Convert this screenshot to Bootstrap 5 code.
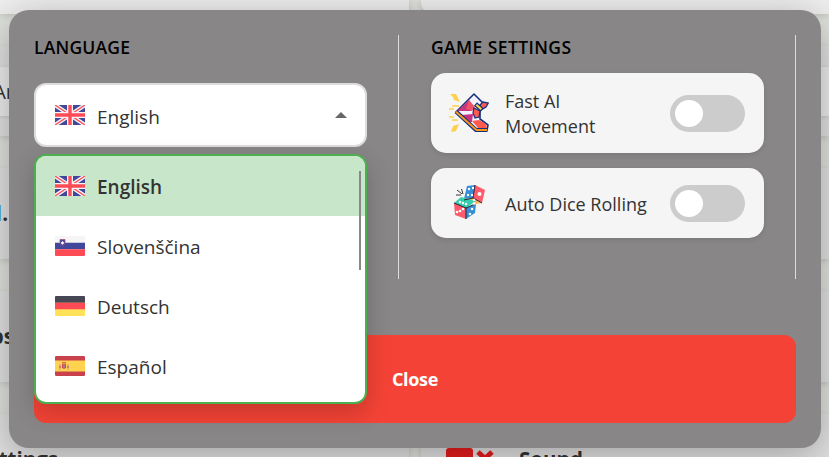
<!DOCTYPE html>
<html lang="en">
<head>
<meta charset="utf-8">
<meta name="viewport" content="width=device-width, initial-scale=1">
<title>Language and game settings</title>
<link rel="stylesheet" href="https://cdn.jsdelivr.net/npm/bootstrap@5.3.0/dist/css/bootstrap.min.css">
<style>
body{font-family:"Open Sans","Noto Sans",sans-serif;color:#333;background:#e1e4de;height:457px;overflow:hidden}
.backdrop-page{height:457px;column-gap:12px;overflow:hidden}
.page-col{flex:1 1 0;min-width:0;row-gap:32px}
.page-col:first-child{flex:0 0 409px}
.tile{background:#e2e2e3;box-shadow:0 2px 6px rgba(0,0,0,.13);flex:none;overflow:hidden;white-space:nowrap;font-size:20.5px;font-weight:700}
.tile-head{height:14px;background:#efefef}
.tile-name{height:90px;padding:21px 0 20px}
.tile-row{height:91px}
.tile-last{height:91px}
.page-col:last-child .tile-head{border-bottom-left-radius:12px}
.name-box{background:#ededee;height:49px;line-height:49px;font-size:20px;font-weight:400;box-shadow:0 1px 4px rgba(0,0,0,.12)}
.cut{display:flex;justify-content:flex-end}
.cut-sm{width:14px}.cut-md{width:8px}.cut-lg{width:58px}
.accent{color:#4ea6dc}
.panel{left:9px;top:10px;width:812px;height:438px;background:#888686;border-radius:20px;padding:25px;box-shadow:0 8px 40px rgba(0,0,0,.3)}
.section-box{width:365px;height:244px;padding-right:31px;border-right:1px solid #ddd}
.sections{gap:32px}
.title{font-size:17.5px;line-height:25px;font-weight:600;letter-spacing:.4px;color:#000;margin:0;white-space:nowrap}
.title.t-lang{letter-spacing:.2px}
.picker{height:64px;margin-top:23px;border:2px solid #ddd;border-radius:12px;background:#fff;padding:4px 18px 0 19px;font-size:19px;color:#333}
.flag{width:30px;height:20px;flex:none;margin-right:12px;position:relative;top:-1px;display:block}
.picker .flag{top:-2px}
.caret{width:0;height:0;border:6px solid transparent;border-top:0;border-bottom-color:#666;margin-top:-4px}
.options{top:119px;left:0;width:333px;height:250px;border:2px solid #4caf50;border-radius:12px;background:#fff;overflow:hidden;box-shadow:0 8px 24px rgba(0,0,0,.2);z-index:3;margin:0;font-size:19px}
.option{height:60px;padding:2px 19px 0}
.option.chosen{background:#c8e6c9;font-weight:600}
.thumb{width:2px;height:99px;top:15px;right:4px;background:#888}
.setting{background:#f5f5f5;border-radius:15px;box-shadow:0 2px 5px rgba(0,0,0,.1);padding:0 19px 0 18px;font-size:18px;line-height:25px}
.setting svg{width:40px;height:40px;flex:none}
.setting .caption{width:153px;margin-left:16px;padding-top:2px;flex:none;white-space:nowrap}
.tall{height:80px;margin-top:13px}.short{height:70px;margin-top:15px}
.toggle{width:75px;height:37px;border-radius:20px;background:#ccc;padding:5px;margin-left:auto}
.knob{width:28px;height:27px;border-radius:50%;background:#fff}
.close-btn,.close-btn:hover{height:88px;margin-top:56px;background:#f44336;color:#fff;border:0;border-radius:12px;font:700 18px "Open Sans","Noto Sans",sans-serif;letter-spacing:-.3px}
</style>
</head>
<body>
<div class="backdrop-page d-flex">
  <div class="page-col d-flex flex-column">
    <div class="tile tile-head"></div>
    <div class="tile tile-name"><div class="name-box"><span class="cut cut-sm">Ar</span></div></div>
    <div class="tile tile-row d-flex align-items-center"><span class="cut cut-md"><span class="accent">d</span>.</span></div>
    <div class="tile tile-row d-flex align-items-center"><span class="cut cut-sm">Tips</span></div>
    <div class="tile tile-last d-flex align-items-center"><span class="cut cut-lg">Settings</span></div>
  </div>
  <div class="page-col d-flex flex-column">
    <div class="tile tile-head"></div>
    <div class="tile tile-name"><div class="name-box"></div></div>
    <div class="tile tile-row"></div>
    <div class="tile tile-row"></div>
    <div class="tile tile-last d-flex align-items-center">
      <svg class="ms-4" width="50" height="28" viewBox="0 0 50 28" aria-hidden="true"><rect x="1" y="2" width="27" height="24" rx="3" fill="#e81c1c"/><path d="M33 6l14 13M47 6L33 19" stroke="#e81c1c" stroke-width="5"/></svg>
      <span class="ms-4">Sound</span>
    </div>
  </div>
</div>

<svg class="d-none">
  <defs>
    <symbol id="uk" viewBox="0 0 30 20"><rect width="30" height="20" fill="#41479b"/><path d="M0 0L30 20M30 0L0 20" stroke="#f5f5f5" stroke-width="4"/><path d="M0 0L30 20M30 0L0 20" stroke="#ff4b55" stroke-width="1.3"/><path d="M15 0V20M0 10H30" stroke="#f5f5f5" stroke-width="6"/><path d="M15 0V20M0 10H30" stroke="#ff4b55" stroke-width="3.4"/></symbol>
  </defs>
</svg>

<main class="panel position-absolute">
  <div class="sections d-flex">
    <section class="section-box position-relative">
      <h2 class="title t-lang">LANGUAGE</h2>
      <div class="picker d-flex align-items-center">
        <svg class="flag"><use href="#uk"/></svg><span>English</span><i class="caret ms-auto"></i>
      </div>
      <ul class="options list-unstyled position-absolute">
        <li class="option chosen d-flex align-items-center"><svg class="flag"><use href="#uk"/></svg>English</li>
        <li class="option d-flex align-items-center">
          <svg class="flag" viewBox="0 0 30 20"><rect width="30" height="20" rx="1.2" fill="#f5f5f5"/><path d="M0 6.7H30V13.3H0Z" fill="#41479b"/><path d="M0 13.3H30V19q0 1-1 1H1q-1 0-1-1Z" fill="#ff4b55"/><path d="M5 3.5h5v3q0 2.5-2.5 3.5Q5 9 5 6.500Z" fill="#41479b" stroke="#a04a78" stroke-width=".7"/><path d="M5.800 7L7.500 5 9.200 7 7.500 8.800Z" fill="#fff"/></svg>Slovenščina</li>
        <li class="option d-flex align-items-center">
          <svg class="flag" viewBox="0 0 30 20"><rect width="30" height="20" rx="1.2" fill="#ffe15a"/><path d="M0 6.700V1q0-1 1-1H29q1 0 1 1V6.700Z" fill="#464655"/><path d="M0 6.700H30V13.300H0Z" fill="#ff4b55"/></svg>Deutsch</li>
        <li class="option d-flex align-items-center">
          <svg class="flag" viewBox="0 0 30 20"><rect width="30" height="20" rx="1.2" fill="#c8414b"/><path d="M0 4.500H30V15.500H0Z" fill="#ffd250"/><path d="M7 8.200h4v3.500q-2 2.300-4 0Z" fill="#c8414b"/><path d="M5 8v6M13 8v6" stroke="#bda6a2" stroke-width="1.200"/><path d="M4 11h2M12 11h2M7 6.700h4" stroke="#d46b48" stroke-width="1.400"/><circle cx="9" cy="10.500" r="1.100" fill="#8f9dd0"/></svg>Español</li>
        <li class="thumb position-absolute"></li>
      </ul>
    </section>
    <section class="section-box">
      <h2 class="title">GAME SETTINGS</h2>
      <div class="setting tall d-flex align-items-center">
        <svg viewBox="0 0 40 40" aria-hidden="true">
          <path d="M1 1L7 1 11 9 5 7 4 4ZM2 39L4 33 10 31 7 38Z" fill="#ffd04b"/>
          <path d="M3 13h7M0 16h5M0 24h5M3 27h6" stroke="#ffd04b" stroke-width="1.400"/>
          <path d="M25 1L7 19 27 37H38L39 32 31 26 31 18 35 14 35 11Z" fill="#f4f2ff" stroke="#14317d" stroke-width="1.600" stroke-linejoin="round"/>
          <path d="M20 7L8 18 22 18 24 14Z" fill="#c7357c"/><path d="M20 7L26 14 23 18 17 16Z" fill="#ef5368"/>
          <path d="M13 22L24 21 23 29 20 29Z" fill="#c83180"/>
          <path d="M23 28L30 27 37 31 38 35 29 35Z" fill="#ff5a4d"/>
          <path d="M7 18.500L27 37H38.500" fill="none" stroke="#14317d" stroke-width="4.200" stroke-linejoin="round"/>
          <path d="M7 18.700L27.500 37H38" fill="none" stroke="#ff981f" stroke-width="1.900"/>
          <path d="M25 15L31 18 30 24 26 25 24 20Z" fill="#ff5a4d" stroke="#14317d" stroke-width="1.200"/>
          <path d="M31 12L34 9 39.300 10 37 14 32 17Z" fill="#ff5a4d" stroke="#14317d" stroke-width="1.300"/>
          <path d="M26.500 11L33 17" stroke="#14317d" stroke-width="4.500"/><path d="M27.300 11.700L32.300 16.300" stroke="#ffd04b" stroke-width="2.200"/>
        </svg>
        <span class="caption">Fast AI<br>Movement</span>
        <div class="toggle"><div class="knob"></div></div>
      </div>
      <div class="setting short d-flex align-items-center">
        <svg viewBox="0 0 40 40" aria-hidden="true">
          <path d="M18 3L26 2 24 15 15 16Z" fill="#368fd5"/><path d="M26 2L36 7 33 20 24 15Z" fill="#ff5a6b"/><path d="M15 16L24 15 33 20 27 21Z" fill="#ffb55c"/>
          <path d="M5 20L12 14 27 18 17 25Z" fill="#36cfae"/><path d="M5 20L17 25V36L6 32Z" fill="#ff5a6b"/><path d="M17 25L27 21 26 30 17 36Z" fill="#368fd5"/>
          <path d="M26 2L24 15 33 20M5 20L17 25V36M17 25L26 21M24 15L15 17" fill="none" stroke="#202330" stroke-width="1"/>
          <path d="M8 7L13 11M12.500 6L14 11M7 12L12 12" stroke="#333" stroke-width="1"/>
          <g fill="#fff"><circle cx="20" cy="6" r="1.200"/><circle cx="24" cy="5" r="1.200"/><circle cx="19" cy="12" r="1.200"/><circle cx="23" cy="12" r="1.200"/><circle cx="30.500" cy="11" r="2"/><circle cx="25" cy="17" r="1.300"/><circle cx="25" cy="20.500" r="1.300"/><circle cx="11" cy="19" r="1.200"/><circle cx="14" cy="20" r="1.200"/><circle cx="17" cy="21" r="1.200"/><circle cx="8" cy="29" r="1.300"/><circle cx="11" cy="28" r="1.300"/><circle cx="14" cy="26" r="1.300"/><circle cx="23" cy="26" r="1.300"/><circle cx="21" cy="31" r="1.300"/></g>
        </svg>
        <span class="caption">Auto Dice Rolling</span>
        <div class="toggle"><div class="knob"></div></div>
      </div>
    </section>
  </div>
  <button class="close-btn btn d-block w-100" type="button">Close</button>
</main>
<script src="https://cdn.jsdelivr.net/npm/bootstrap@5.3.0/dist/js/bootstrap.bundle.min.js"></script>
</body>
</html>
